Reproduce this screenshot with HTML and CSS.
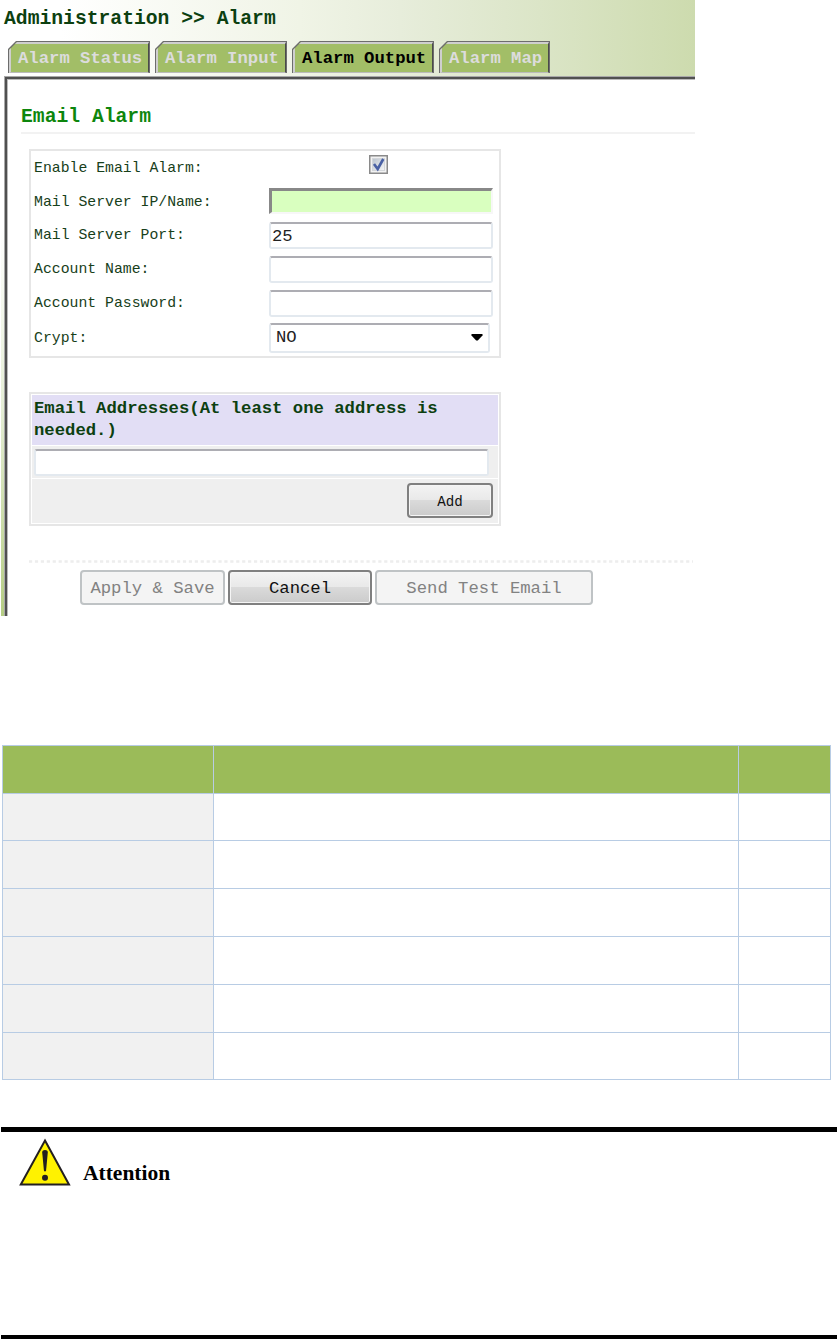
FILE: index.html
```html
<!DOCTYPE html>
<html lang="en">
<head>
<meta charset="utf-8">
<title>Administration - Alarm</title>
<link rel="stylesheet" href="styles.css">
</head>
<body>
<section class="console">
  <header class="top">
    <h1 class="crumb">Administration &gt;&gt; Alarm</h1>
    <nav class="tabs">
      <a class="tab tab-status"><span>Alarm Status</span></a>
      <a class="tab tab-input"><span>Alarm Input</span></a>
      <a class="tab tab-output active"><span>Alarm Output</span></a>
      <a class="tab tab-map"><span>Alarm Map</span></a>
    </nav>
  </header>
  <div class="body">
    <main class="panel">
      <h2 class="heading">Email Alarm</h2>
      <div class="form">
        <div class="row"><span class="label">Enable Email Alarm:</span>
          <span class="check"><svg width="19" height="19" viewBox="0 0 19 19">
            <defs><linearGradient id="ck" x1="0" y1="0" x2="1" y2="1"><stop offset="0" stop-color="#b9c2cd"/><stop offset="1" stop-color="#f6f6f6"/></linearGradient></defs>
            <rect x=".75" y=".75" width="17.5" height="17.5" fill="#f2f2f2" stroke="#8a8a8a" stroke-width="1.5"/>
            <rect x="3.5" y="3.5" width="12" height="12" fill="url(#ck)" stroke="#d3d6da"/>
            <path d="M5 9L8.7 14L14.3 4" fill="none" stroke="#4960a4" stroke-width="2.6"/>
          </svg></span></div>
        <div class="row"><span class="label">Mail Server IP/Name:</span><span class="field required"></span></div>
        <div class="row"><span class="label">Mail Server Port:</span><span class="field">25</span></div>
        <div class="row"><span class="label">Account Name:</span><span class="field"></span></div>
        <div class="row"><span class="label">Account Password:</span><span class="field"></span></div>
        <div class="row last"><span class="label">Crypt:</span><span class="field select">NO<svg width="12" height="7" viewBox="0 0 12 7"><path d="M.5 0H11.5V1.5L6.8 6.5H5.2L.5 1.5Z" fill="#000"/></svg></span></div>
      </div>
      <div class="addresses">
        <div class="addr-title">Email Addresses(At least one address is<br>needed.)</div>
        <div class="addr-entry"><span class="field wide"></span></div>
        <div class="addr-actions"><button class="btn add">Add</button></div>
      </div>
      <svg class="rule" width="666" height="3"><path d="M1 1.5H665" stroke="#ededed" stroke-width="2.6" stroke-dasharray="3.2 2.72"/></svg>
      <div class="buttons">
        <button class="btn off apply">Apply &amp; Save</button>
        <button class="btn cancel">Cancel</button>
        <button class="btn off test">Send Test Email</button>
      </div>
    </main>
  </div>
</section>
<div class="grid">
  <i class="head"></i><i class="head"></i><i class="head"></i>
  <i class="name"></i><i></i><i></i>
  <i class="name"></i><i></i><i></i>
  <i class="name"></i><i></i><i></i>
  <i class="name"></i><i></i><i></i>
  <i class="name"></i><i></i><i></i>
  <i class="name"></i><i></i><i></i>
</div>
<section class="notice">
  <svg width="52" height="49" viewBox="0 0 52 49">
    <path d="M26 2.5L50 46.5H1.8Z" fill="#fff200" stroke="#231f20" stroke-width="2"/>
    <path d="M23.2 14.5Q23 12 26 12Q29 12 28.8 14.5L27 33.3H25Z" fill="#231f20"/>
    <circle cx="26" cy="39.7" r="3" fill="#231f20"/>
  </svg>
  <strong>Attention</strong>
</section>
</body>
</html>
```
FILE: styles.css
```css
* { box-sizing: border-box; }
body {
  margin: 0;
  width: 837px;
  height: 1339px;
  overflow: hidden;
  background: #fff;
  font-family: "Liberation Mono", monospace;
}
.console { width: 695px; height: 616px; }
.top {
  height: 76px;
  background: linear-gradient(90deg, #fff 60px, #f0f4e6 300px, #e7eddb 400px, #dbe5c7 540px, #cddbae 695px);
}
.crumb {
  margin: 0;
  padding: 4px 0 0 4px;
  height: 41px;
  font-size: 19.7px;
  line-height: 30px;
  color: #0c4010;
  white-space: pre;
}
.tabs { display: flex; gap: 5px; padding-left: 8px; }
.tab {
  height: 32px;
  padding: 1px;
  background: #6d6d6d;
  clip-path: polygon(8px 0, 100% 0, 100% 100%, 0 100%, 0 8px);
}
.tab span {
  display: block;
  height: 31px;
  border: 2px solid #cfcfcf;
  border-right: 1px solid #4a4a4a;
  border-bottom: 1px solid #bcbcbc;
  padding-left: 7px;
  background: #a2be67;
  clip-path: polygon(8px 0, 100% 0, 100% 100%, 0 100%, 0 8px);
  font-size: 17.25px;
  font-weight: bold;
  line-height: 29px;
  color: #dcdcdc;
  white-space: pre;
}
.tab.active span { color: #000; }
.tab-status { width: 142px; }
.tab-input { width: 132px; }
.tab-output { width: 142px; }
.tab-map { width: 111px; }
.body {
  height: 540px;
  padding-left: 4px;
  background: linear-gradient(90deg, #fff 1px, transparent 1px), linear-gradient(#fff 150px, #e5eed6 330px, #b5cd84);
}
.panel {
  height: 540px;
  border: 1px solid #a9a9a9;
  border-width: 1px 0 0 1px;
  padding: 2px 0 0 2px;
  box-shadow: inset 2px 2px #505050, inset 3px 3px #bbb;
  background: #fff;
}
.heading {
  margin: 0 0 15px 14px;
  height: 55px;
  padding-top: 24px;
  border-bottom: 2px solid #f2f2f2;
  font-size: 19.7px;
  line-height: 28px;
  color: #0d860d;
}
.form {
  margin-left: 22px;
  width: 472px;
  height: 209px;
  border: 2px solid #e6e6e6;
  padding: 0 0 0 3px;
}
.row { display: flex; align-items: center; height: 33.8px; }
.row.last { height: 36px; }
.label { width: 235px; font-size: 14.8px; color: #17401a; white-space: pre; }
.check { width: 219px; display: flex; justify-content: center; padding-bottom: 6px; }
.field {
  width: 224px;
  height: 27px;
  border: 2px solid #e3e9ef;
  border-top: 2px solid #adadb3;
  border-radius: 3px;
  padding-left: 1px;
  background: #fff;
  font-size: 17.25px;
  line-height: 25px;
  color: #222;
}
.required {
  height: 26px;
  margin-bottom: 1px;
  border-color: #888 #f7f7f7 #f7f7f7 #888;
  border-width: 3px 2px 2px 3px;
  border-radius: 0;
  background: #d9ffbf;
}
.select {
  display: flex;
  align-items: center;
  justify-content: space-between;
  width: 221px;
  height: 30px;
  padding: 0 5px;
}
.addresses {
  margin: 34px 0 0 22px;
  width: 472px;
  height: 134px;
  padding: 1px;
  border: 2px solid #e6e6e6;
  display: grid;
  grid-template-rows: 50px 32px 44px;
  gap: 1px;
}
.addr-title {
  background: #e2def5;
  padding: 3px 0 0 2px;
  font-size: 17.25px;
  font-weight: bold;
  line-height: 22px;
  color: #0c4010;
  white-space: pre;
}
.addr-entry, .addr-actions { background: #efefef; }
.addr-entry { padding: 3px 0 0 2px; display: flex; }
.wide { width: 455px; }
.addr-actions { display: flex; justify-content: flex-end; padding: 4px 5px 0 0; }
.btn {
  height: 35px;
  padding: 0;
  border: 2px solid #808080;
  border-radius: 4px;
  background: linear-gradient(#f3f3f3, #e9e9e9 48%, #dadada 50%, #cbcbcb);
  box-shadow: inset 0 0 0 1px #f5f5f5;
  font-family: "Liberation Mono", monospace;
  font-size: 17.25px;
  line-height: 31px;
  color: #111;
}
.btn.off {
  border-color: #bfc3c5;
  background: #f4f4f4;
  color: #828282;
}
.btn.add { width: 86px; padding-top: 3px; font-size: 14.2px; line-height: 28px; }
.rule { display: block; margin: 34px 0 0 21px; }
.buttons { display: flex; gap: 3px; padding: 7px 0 0 73px; }
.buttons .btn { padding-top: 2px; line-height: 29px; }
.apply { width: 145px; }
.cancel { width: 144px; }
.test { width: 218px; }
.grid {
  margin: 129px 0 0 2px;
  width: 829px;
  height: 335px;
  padding: 1px;
  background: #b8cce4;
  display: grid;
  grid-template-columns: 210px 524px 91px;
  grid-template-rows: 47px 46px 47px 47px 47px 47px 46px;
  gap: 1px;
}
.grid i { background: #fff; }
.grid .name { background: #f1f1f1; }
.grid .head { background: #9bbb59; }
.notice {
  margin: 47px 0 0 1px;
  height: 212px;
  border-top: 5px solid #000;
  border-bottom: 4px solid #000;
  padding: 6px 0 0 18px;
  display: flex;
  align-items: flex-start;
  font-family: "Liberation Serif", serif;
}
.notice strong { margin: 23px 0 0 12px; font-size: 21.5px; line-height: 24px; }
```
